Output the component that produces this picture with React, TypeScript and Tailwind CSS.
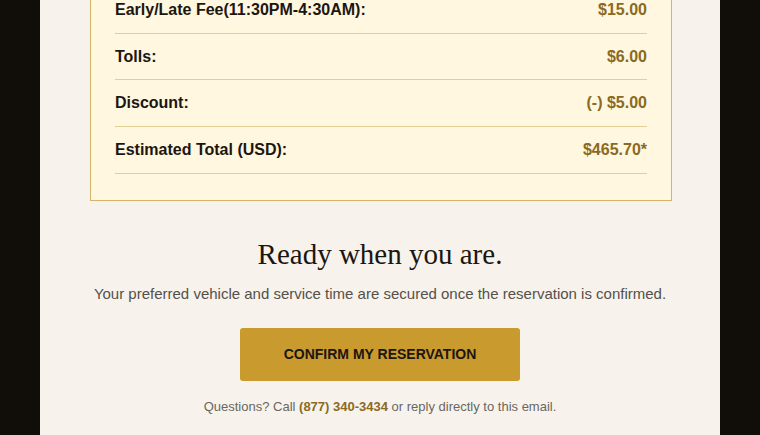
export default function App() {
  const rows = [
    { label: 'Early/Late Fee(11:30PM-4:30AM):', value: '$15.00' },
    { label: 'Tolls:', value: '$6.00' },
    { label: 'Discount:', value: '(-) $5.00' },
    { label: 'Estimated Total (USD):', value: '$465.70*' },
  ]

  return (
    <div className="min-h-screen w-full bg-[#110d09] flex justify-center overflow-hidden" style={{ fontFamily: '"Liberation Sans", Arial, sans-serif' }}>
      <div className="w-[680px] bg-[#f7f3ec] pl-[50px] pr-[48px] pb-[40px]">
        <div className="-mt-[38px] border border-[#d4b36a] bg-[#fff7e0] px-[24px] pt-[24px] pb-[26px]">
          {rows.map((r) => (
            <div key={r.label} className="flex items-center justify-between border-b border-[#e2cf93] pt-[14px] pb-[14px] leading-[17.67px] text-[16px] font-bold">
              <span className="text-[#1c1610]">{r.label}</span>
              <span className="text-[#8a6a1f]">{r.value}</span>
            </div>
          ))}
        </div>

        {/* call to action */}
        <div className="flex flex-col items-center pt-[35px] pr-[2px]">
          <h2 className="text-[29px] leading-[36px] text-[#1c1610]" style={{ fontFamily: '"Liberation Serif", Georgia, serif' }}>
            Ready when you are.
          </h2>
          <p className="mt-[12px] text-[15px] leading-[20px] text-[#555049]">
            Your preferred vehicle and service time are secured once the reservation is confirmed.
          </p>
          <button className="mt-[24px] w-[280px] h-[53px] rounded-[3px] bg-[#c99a2e] text-[14px] font-bold text-[#1c1610]">
            CONFIRM MY RESERVATION
          </button>
          <p className="mt-[17px] text-[13px] leading-[18px] text-[#6b665e]">
            Questions? Call <span className="font-bold text-[#8a6a1f]">(877) 340-3434</span> or reply directly to this email.
          </p>
        </div>
      </div>
    </div>
  )
}
